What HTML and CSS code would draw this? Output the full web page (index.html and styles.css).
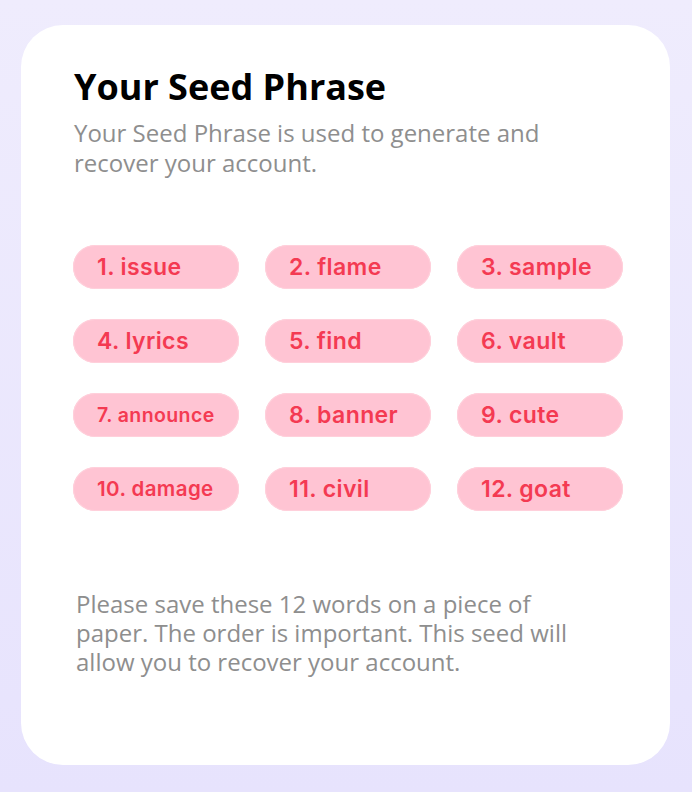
FILE: index.html
```html
<!DOCTYPE html>
<html>
<head>
<meta charset="utf-8">
<link rel="stylesheet" href="styles.css">
</head>
<body>
<div class="card">
  <h1 class="title">Your Seed Phrase</h1>
  <p class="subtitle">Your Seed Phrase is used to generate and recover your account.</p>
  <div class="grid">
    <div class="pill">1. issue</div>
    <div class="pill">2. flame</div>
    <div class="pill">3. sample</div>
    <div class="pill">4. lyrics</div>
    <div class="pill">5. find</div>
    <div class="pill">6. vault</div>
    <div class="pill pill-xs">7. announce</div>
    <div class="pill">8. banner</div>
    <div class="pill">9. cute</div>
    <div class="pill pill-sm">10. damage</div>
    <div class="pill">11. civil</div>
    <div class="pill">12. goat</div>
  </div>
  <p class="note">Please save these 12 words on a piece of paper. The order is important. This seed will allow you to recover your account.</p>
</div>
</body>
</html>
```
FILE: styles.css
```css
html, body {
  margin: 0;
  padding: 0;
}
body {
  width: 692px;
  height: 792px;
  background: linear-gradient(#efecfd, #e7e3fd);
  padding: 25px 22px 27px 21px;
  box-sizing: border-box;
  font-family: "Open Sans", sans-serif;
}
.card {
  background: #ffffff;
  border-radius: 42px;
  height: 740px;
  box-sizing: border-box;
  padding: 41px 52px 0 53px;
}
.title {
  margin: 0;
  font-size: 36px;
  font-weight: 700;
  line-height: 42px;
  color: #000;
}
.subtitle {
  margin: 10px 0 0 0;
  width: 490px;
  font-size: 24px;
  line-height: 30px;
  color: #8e8e8e;
}
.grid {
  margin-top: 67px;
  display: grid;
  grid-template-columns: repeat(3, 166px);
  column-gap: 26px;
  row-gap: 30px;
  margin-left: -1px;
}
.pill {
  height: 44px;
  border-radius: 22px;
  background: #ffc4d3;
  color: #f43a52;
  font-family: Inter, sans-serif;
  font-weight: 600;
  font-size: 23px;
  letter-spacing: 0.4px;
  line-height: 44px;
  padding-left: 24px;
  box-sizing: border-box;
  box-shadow: inset 0 0 0 1px #ffd0db;
  white-space: nowrap;
}
.pill-xs {
  font-size: 19.5px;
}
.pill-sm {
  font-size: 20.5px;
}
.note {
  margin: 78px 0 0 2px;
  width: 500px;
  font-size: 24px;
  line-height: 29px;
  color: #8e8e8e;
}
```
